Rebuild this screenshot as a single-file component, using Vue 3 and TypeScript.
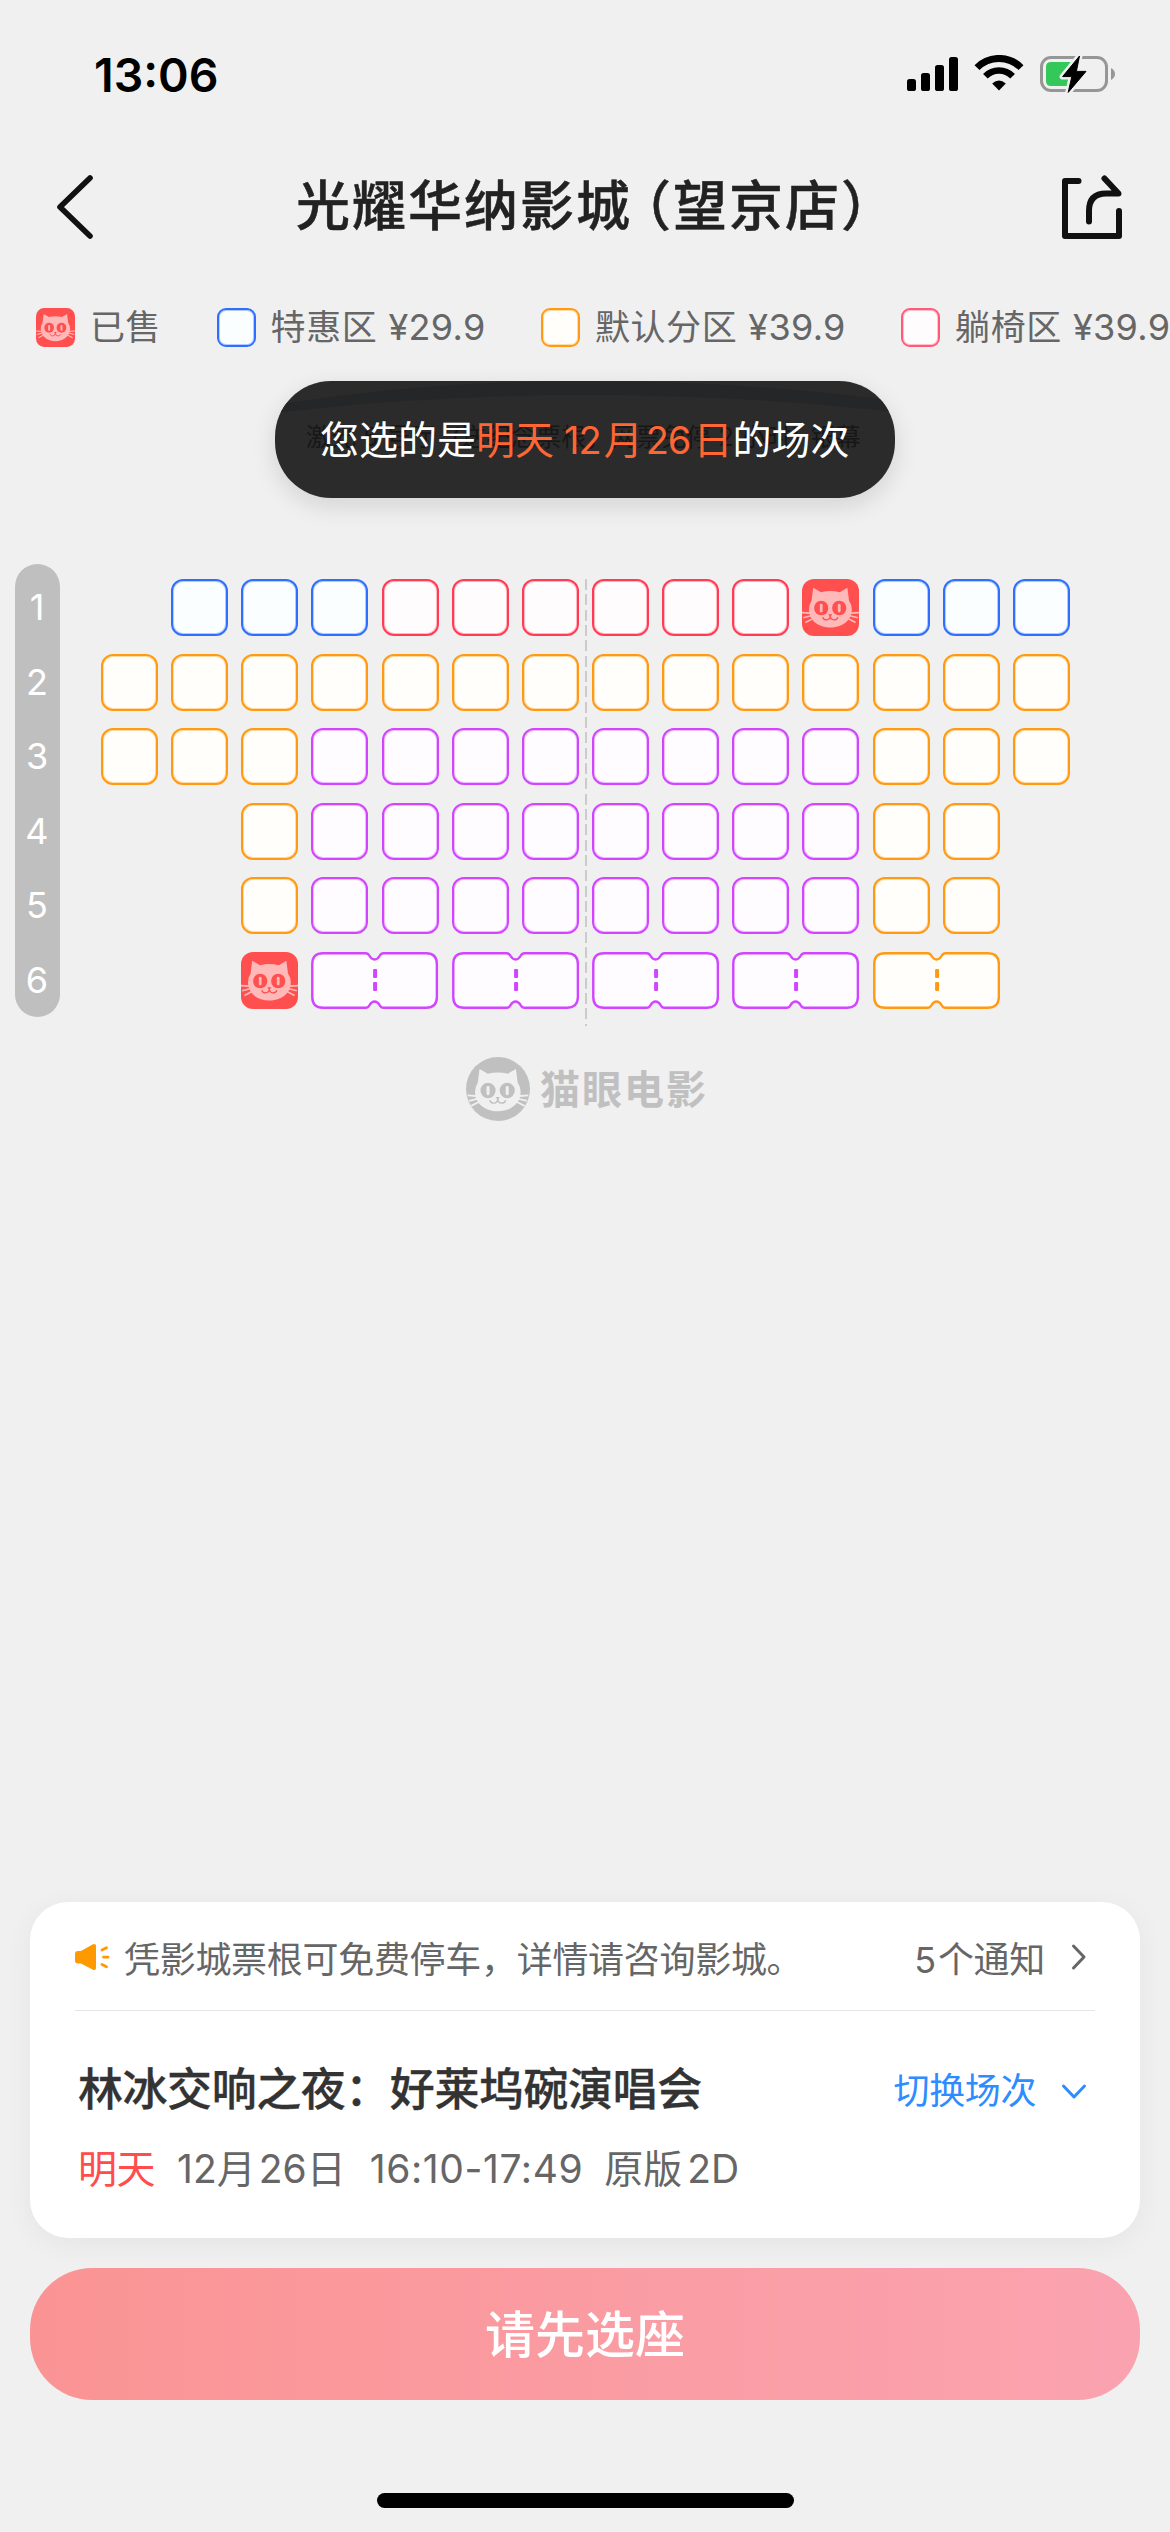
<script setup lang="ts">
import { computed, defineComponent, h } from 'vue'

type Zone = 'blue' | 'orange' | 'red' | 'purple' | 'sold'

interface Run {
  zone: Zone
  from: number
  to: number
  couple?: boolean
}

interface Seat {
  key: string
  zone: Zone
  row: number
  col: number
  span: number
}

/* Cat face shared by the sold seats and the brand mark. */
const CatFace = defineComponent({
  props: { face: { type: String, required: true }, hole: { type: String, required: true } },
  setup(props) {
    return () =>
      h('g', { fill: 'none', 'stroke-linecap': 'butt' }, [
        h('path', {
          fill: props.face,
          d: 'M11.2 8.8 L19 13.2 Q28.5 10.8 37.8 13.2 L45.4 8.8 L47 21.5 Q49.8 25.5 49.8 30.5 C49.8 41.5 40 48.6 28.4 48.6 C16.8 48.6 7 41.5 7 30.5 Q7 25.5 9.6 21.5 Z',
        }),
        h('path', {
          stroke: props.face,
          'stroke-width': 1.7,
          d: 'M0 33.6 L8 34.2 M1.2 38.8 L9 36.8 M3.4 43.4 L10.6 39.8 M57 33.6 L49 34.2 M55.8 38.8 L48 36.8 M53.6 43.4 L46.4 39.8',
        }),
        h('ellipse', { cx: 19.2, cy: 29, rx: 7.1, ry: 7.3, fill: props.hole }),
        h('ellipse', { cx: 37.2, cy: 29, rx: 7.1, ry: 7.3, fill: props.hole }),
        h('rect', { x: 17.8, y: 24.8, width: 2.8, height: 8.6, rx: 1.4, fill: props.face }),
        h('rect', { x: 35.8, y: 24.8, width: 2.8, height: 8.6, rx: 1.4, fill: props.face }),
        h('path', { fill: props.hole, d: 'M26.2 35.2 H30.4 L28.3 38 Z' }),
        h('path', {
          stroke: props.hole,
          'stroke-width': 1.3,
          d: 'M20.8 38.2 Q21.6 40.9 24.4 40.9 Q28.3 40.7 28.3 36.8 Q28.3 40.7 32.2 40.9 Q35 40.9 35.8 38.2',
        }),
      ])
  },
})

const rows: Run[][] = [
  [
    { zone: 'blue', from: 2, to: 4 },
    { zone: 'red', from: 5, to: 10 },
    { zone: 'sold', from: 11, to: 11 },
    { zone: 'blue', from: 12, to: 14 },
  ],
  [{ zone: 'orange', from: 1, to: 14 }],
  [
    { zone: 'orange', from: 1, to: 3 },
    { zone: 'purple', from: 4, to: 11 },
    { zone: 'orange', from: 12, to: 14 },
  ],
  [
    { zone: 'orange', from: 3, to: 3 },
    { zone: 'purple', from: 4, to: 11 },
    { zone: 'orange', from: 12, to: 13 },
  ],
  [
    { zone: 'orange', from: 3, to: 3 },
    { zone: 'purple', from: 4, to: 11 },
    { zone: 'orange', from: 12, to: 13 },
  ],
  [
    { zone: 'sold', from: 3, to: 3 },
    { zone: 'purple', from: 4, to: 11, couple: true },
    { zone: 'orange', from: 12, to: 13, couple: true },
  ],
]

const seats = computed<Seat[]>(() =>
  rows.flatMap((runs, r) =>
    runs.flatMap((run) => {
      const span = run.couple ? 2 : 1
      const list: Seat[] = []
      for (let c = run.from; c <= run.to; c += span) {
        list.push({ key: `${r}-${c}`, zone: run.zone, row: r + 1, col: c, span })
      }
      return list
    }),
  ),
)

const legend: { zone: string; label: string; price: string }[] = [
  { zone: 'blue', label: '特惠区', price: '¥29.9' },
  { zone: 'orange', label: '默认分区', price: '¥39.9' },
  { zone: 'pink', label: '躺椅区', price: '¥39.9' },
]
</script>

<template>
  <div class="page">
    <header class="status">
      <span class="time">13:06</span>
      <div class="status-icons">
        <svg class="signal" width="52" height="36" viewBox="0 0 52 36">
          <rect x="0" y="23" width="9" height="12" rx="2.6" />
          <rect x="14" y="17" width="9" height="18" rx="2.6" />
          <rect x="28" y="9" width="9" height="26" rx="2.6" />
          <rect x="42" y="1" width="9" height="34" rx="2.6" />
        </svg>
        <svg class="wifi" width="50" height="36" viewBox="0 0 50 36">
          <path d="M3 12.6 A31 31 0 0 1 47 12.6" fill="none" stroke="#000" stroke-width="7" />
          <path d="M11.4 21.2 A19 19 0 0 1 38.6 21.2" fill="none" stroke="#000" stroke-width="6.6" />
          <path d="M25 35.4 L18.2 28.6 Q25 22.6 31.8 28.6 Z" />
        </svg>
        <svg class="battery" width="76" height="38" viewBox="0 0 76 38">
          <rect x="1.5" y="2.5" width="65" height="33" rx="9.5" fill="none" stroke="#969696" stroke-width="3" />
          <path d="M71 13 Q75 15.5 75 19 Q75 22.500 71 25 Z" fill="#969696" />
          <path d="M11 7 H33 V31 H11 Q6 31 6 26 V12 Q6 7 11 7 Z" fill="#34c759" />
          <path
            d="M39.500 1 L22.600 21.600 H31.800 L28.200 37.400 L46 16.400 H36.400 Z"
            stroke="#f0f0f0" stroke-width="6" stroke-linejoin="round"
          />
          <path d="M39.500 1 L22.600 21.600 H31.800 L28.200 37.400 L46 16.400 H36.400 Z" stroke="#000" stroke-width="1" stroke-linejoin="round" />
        </svg>
      </div>
    </header>

    <nav class="nav">
      <svg class="back" width="42" height="68" viewBox="0 0 42 68">
        <path d="M36 5 L6 34 L36 63" fill="none" stroke="#111" stroke-width="5.600" stroke-linecap="round" stroke-linejoin="round" />
      </svg>
      <h1 class="title">光耀华纳影城<span class="paren">（</span>望京店）</h1>
      <svg class="share" width="64" height="66" viewBox="0 0 64 66" fill="none" stroke="#111" stroke-width="6" stroke-linecap="round" stroke-linejoin="round">
        <path d="M17.500 6 H4 V61 H58 V36" />
        <path d="M28 46.500 V36 Q28 18.500 45 18.500 H57.500 L43.500 3.500" />
      </svg>
    </nav>

    <section class="legend">
      <div class="legend-item">
        <svg class="swatch" viewBox="0 0 57 57">
          <rect width="57" height="57" rx="12" fill="#ff4f4f" />
          <CatFace face="#ffb9b9" hole="#ff4f4f" />
        </svg>
        <span>已售</span>
      </div>
      <div v-for="item in legend" :key="item.zone" class="legend-item">
        <i class="swatch box" :class="item.zone"></i>
        <span>{{ item.label }}<b class="price">{{ item.price }}</b></span>
      </div>
    </section>

    <section class="screen">
      <div class="toast">
        <svg class="arc" width="620" height="117" viewBox="0 0 620 117">
          <path d="M0 24 Q150 0 310 0 Q470 0 620 20 V31 Q470 14 310 14 Q150 14 0 32 Z" fill="#252627" />
        </svg>
        <span class="hall">激光<b>5</b>号厅<b class="open">(</b>送纪念票根，网票免停<b>2</b>小时<b class="close">)</b>银幕</span>
        <p class="message">您选的是<em>明天<span class="n1">12</span>月<span class="n2">26</span>日</em>的场次</p>
      </div>
    </section>

    <section class="map">
      <ol class="row-bar">
        <li v-for="(_, i) in rows" :key="i">{{ i + 1 }}</li>
      </ol>
      <div class="grid">
        <template v-for="seat in seats" :key="seat.key">
          <svg
            v-if="seat.span === 2" class="couple" :class="seat.zone" viewBox="0 0 127 57"
            :style="{ gridRow: seat.row, gridColumn: `${seat.col} / span 2` }"
          >
            <path
              class="outline"
              d="M12 1.200 H54.500 Q57 1.200 58.200 3.500 Q60.500 7.500 63.500 7.500 Q66.500 7.500 68.800 3.500 Q70 1.200 72.500 1.200 H115 Q125.800 1.200 125.800 12 V45 Q125.800 55.800 115 55.800 H72.500 Q70 55.800 68.800 53.500 Q66.500 49.500 63.500 49.500 Q60.500 49.500 58.200 53.500 Q57 55.800 54.500 55.800 H12 Q1.200 55.800 1.200 45 V12 Q1.200 1.200 12 1.200 Z"
            />
            <rect class="dash" x="62" y="17" width="4" height="9" rx="1" />
            <rect class="dash" x="62" y="30" width="4" height="9" rx="1" />
          </svg>
          <svg
            v-else-if="seat.zone === 'sold'" class="seat-sold" viewBox="0 0 57 57"
            :style="{ gridRow: seat.row, gridColumn: seat.col }"
          >
            <rect width="57" height="57" rx="12" fill="#ff4f4f" />
            <CatFace face="#ffb9b9" hole="#ff4f4f" />
          </svg>
          <i v-else class="box" :class="seat.zone" :style="{ gridRow: seat.row, gridColumn: seat.col }"></i>
        </template>
        <span class="centre-line"></span>
      </div>
    </section>

    <div class="brand">
      <svg width="64" height="64" viewBox="0 0 64 64">
        <circle cx="32" cy="32" r="32" fill="#c0c0c0" />
        <g transform="translate(1.600 2.600) scale(1.065)">
          <CatFace face="#f0f0f0" hole="#c0c0c0" />
        </g>
      </svg>
      <span>猫眼电影</span>
    </div>

    <div class="spacer"></div>

    <section class="card">
      <div class="notice">
        <svg class="horn" width="35" height="28" viewBox="0 0 35 28" fill="#ff9900">
          <path d="M3 8 H6 L17.500 1.400 Q21 0 21 3 V25 Q21 28 17.500 26.400 L6 20.500 H3 Q0 20.500 0 17.500 V11 Q0 8 3 8 Z" />
          <path d="M27 7 L31.500 4.700 M28.500 14.200 H33 M27 21.500 L31.500 23.800" stroke="#ff9900" stroke-width="2.800" stroke-linecap="round" />
        </svg>
        <span class="notice-text">凭影城票根可免费停车，详情请咨询影城。</span>
        <span class="notice-count"><span class="five">5</span>个通知</span>
        <svg class="arrow-right" width="16" height="28" viewBox="0 0 16 28">
          <path d="M2.500 3 L13 14 L2.500 25" fill="none" stroke="#666" stroke-width="3" stroke-linecap="round" stroke-linejoin="round" />
        </svg>
      </div>
      <div class="film">
        <h2>林冰交响之夜：好莱坞碗演唱会</h2>
        <span class="switch">切换场次</span>
        <svg class="arrow-down" width="28" height="20" viewBox="0 0 28 20">
          <path d="M3.500 4 L14 15 L24.500 4" fill="none" stroke="#2d8cff" stroke-width="3" stroke-linecap="round" stroke-linejoin="round" />
        </svg>
      </div>
      <div class="session">
        <span class="day">明天</span>
        <span class="date"><span class="n3">12</span>月<span class="n4">26</span>日</span>
        <span class="hours">16:10-17:49</span>
        <span class="format">原版<span class="n5">2D</span></span>
      </div>
    </section>

    <button class="submit" type="button">请先选座</button>
    <div class="home"><i></i></div>
  </div>
</template>

<style>
html,
body {
  margin: 0;
  background: #f0f0f0;
}
</style>

<style scoped>
.page {
  width: 1170px;
  height: 2532px;
  overflow: hidden;
  display: flex;
  flex-direction: column;
  background: #f0f0f0;
  font-family: Inter, "Noto Sans CJK SC", sans-serif;
  font-size: 36px;
  color: #666;
  white-space: nowrap;
}
.page > * {
  flex: none;
}
svg {
  display: block;
  flex: none;
}

.status {
  height: 141px;
  display: flex;
  align-items: flex-start;
  justify-content: space-between;
  padding: 0 54px 0 94px;
  box-sizing: border-box;
}
.time {
  margin-top: 47px;
  font-size: 46.500px;
  line-height: 56px;
  font-weight: 600;
  color: #000;
}
.status-icons {
  display: flex;
  margin-top: 55px;
}
.signal {
  margin-top: 1px;
}
.wifi {
  margin-left: 15px;
}
.battery {
  margin-left: 16px;
}

.nav {
  height: 132px;
  display: flex;
  align-items: center;
  justify-content: space-between;
  padding: 0 45px 0 54px;
}
.title {
  margin: 0;
  font-size: 54px;
  line-height: 80px;
  font-weight: 500;
  letter-spacing: 2px;
  color: #222;
  -webkit-text-stroke: 0.500px #222;
  position: relative;
  left: 18px;
}
.paren {
  margin-left: -15px;
}
.share {
  margin-top: 2px;
}

.legend {
  height: 108px;
  display: flex;
  align-items: center;
  padding-left: 36px;
  overflow: hidden;
}
.legend-item {
  display: flex;
  align-items: center;
  margin-right: 55.400px;
}
.legend-item span {
  font-size: 35px;
  line-height: 52px;
  letter-spacing: 0.600px;
}
.swatch {
  width: 39px;
  height: 39px;
  margin-right: 15px;
}
.price {
  font-weight: 400;
  font-size: 36px;
  margin-left: 11px;
  letter-spacing: 0.300px !important;
}
.box {
  display: block;
  box-sizing: border-box;
  border: 2px solid var(--edge);
  border-radius: 12px;
  background: var(--fill);
  box-shadow: inset 0 0 0 1px color-mix(in srgb, var(--edge) 35%, transparent);
}
.swatch.box {
  border-radius: 9px;
}
.blue {
  --edge: #2e6fff;
  --fill: #fbfeff;
}
.orange {
  --edge: #ff9a12;
  --fill: #fffefb;
}
.red {
  --edge: #ff3b55;
  --fill: #fffcfd;
}
.pink {
  --edge: #ff5a7a;
  --fill: #fffcfd;
}
.purple {
  --edge: #d145ff;
  --fill: #fefcff;
}

.screen {
  height: 183px;
}
.toast {
  position: relative;
  width: 620px;
  height: 117px;
  margin-left: 275px;
  border-radius: 56px;
  background: #2b2b2b;
  box-shadow: 0 8px 24px rgba(0, 0, 0, 0.12);
  display: flex;
  align-items: center;
}
.arc {
  position: absolute;
  inset: 0;
  border-radius: 56px;
}
.hall {
  position: absolute;
  left: 31px;
  top: 37px;
  font-size: 25px;
  line-height: 38px;
  color: #171717;
}
.hall b {
  font-weight: 400;
  margin: 0 7px;
}
.hall .open {
  margin: 0 1px 0 16px;
}
.hall .close {
  margin: 0 10px 0 1px;
}
.message {
  position: relative;
  margin: 0 0 0 45px;
  font-size: 39px;
  line-height: 60px;
  color: #fff;
}
.message em {
  font-style: normal;
  color: #ff6633;
}
.n1,
.n2 {
  font-size: 38px;
  letter-spacing: -1px;
}
.n1 {
  margin: 0 3px 0 10px;
}
.n2 {
  margin: 0 3px 0 3px;
}

.map {
  height: 453px;
  display: flex;
  padding-left: 15px;
}
.row-bar {
  list-style: none;
  margin: 0;
  padding: 6px 1px 0 0;
  width: 45px;
  height: 453px;
  box-sizing: border-box;
  border-radius: 22.500px;
  background: #bfbfbf;
  color: #fff;
  text-align: center;
}
.row-bar li {
  height: 74.600px;
  line-height: 74.600px;
}
.grid {
  position: relative;
  margin: 15px 0 0 41px;
  height: 430px;
  display: grid;
  grid-template-columns: repeat(14, 57px);
  grid-template-rows: repeat(6, 57px);
  column-gap: 13.150px;
  row-gap: 17.600px;
}
.couple,
.seat-sold {
  width: 100%;
  height: 57px;
}
.outline {
  fill: var(--fill);
  stroke: var(--edge);
  stroke-width: 2.400;
}
.dash {
  fill: var(--edge);
}
.centre-line {
  position: absolute;
  left: 484px;
  top: 0;
  width: 2px;
  height: 447px;
  background: repeating-linear-gradient(#cbcbcb 0 11px, transparent 11px 15.330px);
}

.brand {
  display: flex;
  align-items: center;
  height: 64px;
  margin: 40px 0 0 466px;
  font-size: 40px;
  font-weight: 700;
  letter-spacing: 2px;
  color: #c0c0c0;
}
.brand span {
  margin-left: 10px;
  position: relative;
  top: -2px;
}
.page > .spacer {
  flex: 1;
}

.card {
  height: 336px;
  margin: 0 30px;
  padding: 0 45px;
  box-sizing: border-box;
  border-radius: 38px;
  background: #fff;
  box-shadow: 0 6px 30px rgba(0, 0, 0, 0.05);
}
.notice {
  display: flex;
  align-items: center;
  height: 109px;
  padding: 1px 8px 0 0;
  box-sizing: border-box;
  border-bottom: 1px solid #e5e5e5;
  letter-spacing: -0.300px;
}
.notice-text {
  margin-left: 14px;
  flex: 1;
}
.five {
  margin-right: 2px;
}
.arrow-right {
  margin-left: 26px;
}
.film {
  display: flex;
  align-items: center;
  height: 64px;
  margin-top: 47px;
  padding: 0 7px 0 3px;
}
.film h2 {
  margin: 0;
  flex: 1;
  font-size: 45px;
  line-height: 64px;
  font-weight: 500;
  letter-spacing: -0.450px;
  color: #333;
  -webkit-text-stroke: 0.300px #333;
}
.switch {
  color: #2d8cff;
  letter-spacing: -0.400px;
  margin-bottom: 4px;
}
.arrow-down {
  margin: 4px 0 0 24px;
}
.session {
  display: flex;
  align-items: baseline;
  height: 60px;
  margin-top: 17px;
  font-size: 39px;
  line-height: 60px;
}
.day {
  margin-left: 3px;
  color: #ff4d4d;
  letter-spacing: -0.500px;
}
.date {
  margin-left: 22px;
}
.n4 {
  margin-left: 3px;
}
.hours {
  margin-left: 24px;
  letter-spacing: 0.600px;
}
.format {
  margin-left: 21px;
}
.n5 {
  margin-left: 5px;
}

.submit {
  height: 132px;
  margin: 30px 30px 0;
  padding: 3px 0 0;
  border: 0;
  border-radius: 62px;
  background: linear-gradient(90deg, #fa9494, #faa3b0);
  color: #fff;
  font: 500 50px/129px Inter, "Noto Sans CJK SC", sans-serif;
}
.home {
  height: 132px;
  display: flex;
  align-items: flex-end;
  justify-content: center;
  box-sizing: border-box;
  padding-bottom: 24px;
}
.home i {
  width: 417px;
  height: 15px;
  border-radius: 8px;
  background: #000;
}
</style>
